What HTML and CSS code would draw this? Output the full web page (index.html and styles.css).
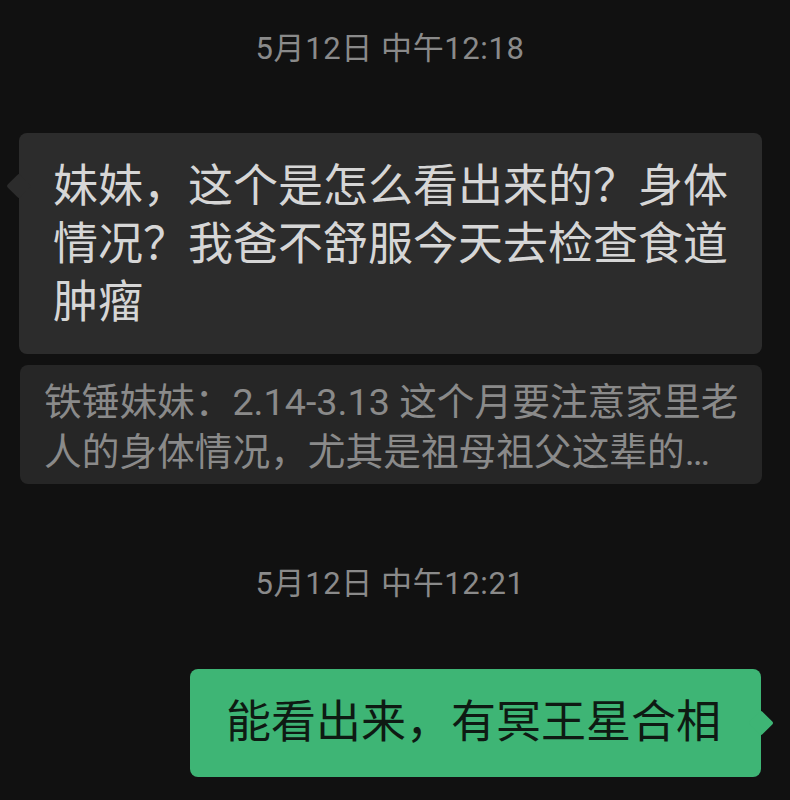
FILE: index.html
```html
<!DOCTYPE html>
<html lang="zh-CN">
    <head>
        <title>聊天</title>
        <meta charset="utf-8">
        <meta name="viewport" content="width=device-width, initial-scale=1.0">
        <link rel="stylesheet" href="styles.css">
    </head>
    <body>
        <div class="chat">

            <div class="time">5月12日 中午12:18</div>

            <div class="msg msg-left">
                <div class="bubble bubble-in">妹妹，这个是怎么看出来的？身体情况？我爸不舒服今天去检查食道肿瘤</div>
                <div class="quote">
                    <span class="quote-text">铁锤妹妹：2.14-3.13 这个月要注意家里老人的身体情况，尤其是祖母祖父这辈的…</span>
                </div>
            </div>

            <div class="time time-gap">5月12日 中午12:21</div>

            <div class="msg msg-right">
                <div class="bubble bubble-out">能看出来，有冥王星合相</div>
            </div>

        </div>
    </body>
</html>
```

FILE: styles.css
```css
:root {
    --background: #111111;
    --bubble: #2c2c2c;
    --quote: #262626;
    --green: #3eb575;
    --muted: #8a8a8a;
}
body {
    margin: 0;
    background: var(--background);
    font-family: Roboto, "Noto Sans CJK SC", sans-serif;
}
.chat {
    padding-top: 29px;
    display: flex;
    flex-direction: column;
}
.time {
    text-align: center;
    padding-right: 10px;
    font-size: 31px;
    letter-spacing: 0.6px;
    line-height: 40px;
    color: var(--muted);
}
.time-gap {
    margin-top: 80px;
}
.msg {
    display: flex;
    flex-direction: column;
}
.msg-left {
    margin: 64px 28px 0 19px;
}
.msg-right {
    align-items: flex-end;
    margin: 65px 29px 0 0;
}
.bubble {
    position: relative;
    border-radius: 8px;
    font-size: 45px;
    line-height: 58px;
}
.bubble::before {
    content: "";
    position: absolute;
    width: 18px;
    height: 18px;
    border-radius: 2px;
    transform: rotate(45deg);
}
.bubble-in {
    background: var(--bubble);
    color: #d6d6d6;
    padding: 25px 30px 22px 34px;
}
.bubble-in::before {
    left: -9px;
    top: 44px;
    background: var(--bubble);
}
.bubble-out {
    background: var(--green);
    color: #0e1a13;
    padding: 25px 40px 25px 36px;
}
.bubble-out::before {
    right: -9px;
    top: 45px;
    background: var(--green);
}
.quote {
    margin-top: 11px;
    margin-left: 1px;
    background: var(--quote);
    border-radius: 8px;
    padding: 12px 14px 7px 24px;
}
.quote-text {
    font-size: 37.7px;
    line-height: 50px;
    color: var(--muted);
    display: -webkit-box;
    -webkit-line-clamp: 2;
    -webkit-box-orient: vertical;
    overflow: hidden;
}
```
